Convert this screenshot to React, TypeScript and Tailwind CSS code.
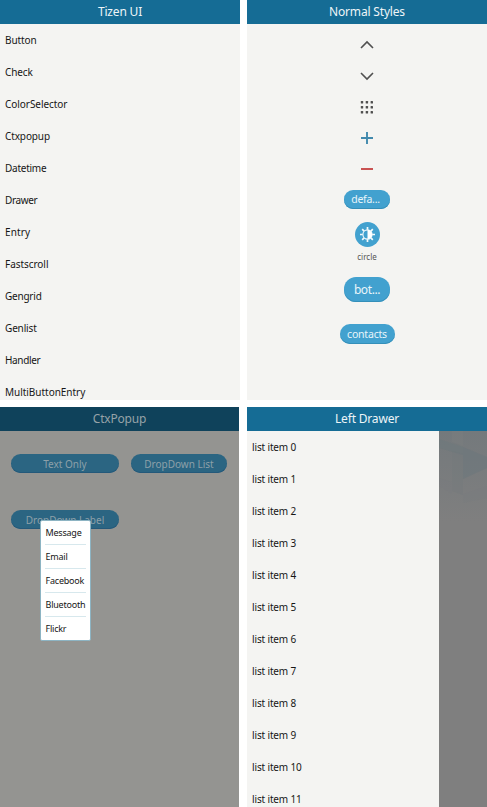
import React from "react";

const categories: [string, string][] = [
  ["Button", "tracking-[-0.1px]"],
  ["Check", "tracking-[-0.1px]"],
  ["ColorSelector", "tracking-[-0.05px]"],
  ["Ctxpopup", "tracking-[-0.12px]"],
  ["Datetime", "tracking-[-0.25px]"],
  ["Drawer", "tracking-[-0.35px]"],
  ["Entry", "tracking-[0.1px]"],
  ["Fastscroll", "tracking-[-0.05px]"],
  ["Gengrid", "tracking-[-0.22px]"],
  ["Genlist", "tracking-[-0.15px]"],
  ["Handler", "tracking-[-0.35px]"],
  ["MultiButtonEntry", "tracking-[-0.03px]"],
];

const drawerItems = Array.from({ length: 12 }, (_, i) => `list item ${i}`);
const popupItems = ["Message", "Email", "Facebook", "Bluetooth", "Flickr"];

function Header({ title, dim = false }: { title: string; dim?: boolean }) {
  return (
    <header
      className={`flex h-6 shrink-0 items-center justify-center text-[12px] leading-6 tracking-[-0.18px] ${
        dim ? "bg-[#0f425b] text-[#96a2a8]" : "bg-[#156c95] text-[#eef5f8]"
      }`}
    >
      {title}
    </header>
  );
}

function Row({ label, tracking = "tracking-[-0.14px]" }: { label: string; tracking?: string }) {
  return (
    <li className={`flex h-8 shrink-0 items-center pl-[5px] text-[10px] text-[#161616] ${tracking}`}>
      {label}
    </li>
  );
}

function Pill({ label, className }: { label: string; className: string }) {
  return (
    <button
      className={`flex items-center justify-center whitespace-nowrap bg-[#42a1cf] text-[#e9f5fa] shadow-[inset_0_-1px_0_#348fb9] ${className}`}
    >
      {label}
    </button>
  );
}

function DimPill({ label }: { label: string }) {
  return (
    <button className="flex h-[19px] items-center justify-center whitespace-nowrap rounded-full bg-[#2b6582] pt-px text-[10px] text-[#8da0a9] shadow-[inset_0_-1px_0_#24597a]">
      {label}
    </button>
  );
}

function Icon({ children }: { children: React.ReactNode }) {
  return (
    <svg className="mb-[15px] h-4 w-4 shrink-0" viewBox="0 0 16 16" fill="none">
      {children}
    </svg>
  );
}

function BrightnessIcon() {
  return (
    <svg className="h-[17px] w-[17px]" viewBox="0 0 17 17" fill="none" stroke="#f4fafc">
      <circle cx="8.5" cy="8.5" r="4.6" strokeWidth="1.1" />
      <path d="M8.5 3.8a4.7 4.7 0 0 1 0 9.4z" fill="#fff" stroke="none" />
      <path
        strokeWidth="1.7"
        d="M8.5 1v2.7M8.5 13.3V16M1 8.5h2.7M13.3 8.5H16M3.2 3.2l1.9 1.9M11.9 11.9l1.9 1.9M3.2 13.8l1.9-1.9M11.9 5.1l1.9-1.9"
      />
    </svg>
  );
}

function NormalStyles() {
  return (
    <section className="flex h-[400px] w-60 flex-col overflow-hidden bg-[#f4f4f2]">
      <Header title="Normal Styles" />
      <div className="flex flex-col items-center pt-[13px]">
        <Icon>
          <path d="M2 11l6-6 6 6" stroke="#505050" strokeWidth="1.6" />
        </Icon>
        <Icon>
          <path d="M2 5l6 6 6-6" stroke="#505050" strokeWidth="1.6" />
        </Icon>
        <Icon>
          {[2, 7, 12].map((y) =>
            [1.8, 6.7, 11.6].map((x) => (
              <rect key={`${x}-${y}`} x={x} y={y} width="2.4" height="2.4" rx=".5" fill="#505050" />
            )),
          )}
        </Icon>
        <Icon>
          <path d="M2 8h12M8 2v12" stroke="#4189ad" strokeWidth="1.9" />
        </Icon>
        <Icon>
          <path d="M2 8h12" stroke="#c95252" strokeWidth="2" />
        </Icon>
        <Pill
          label="defa..."
          className="-mt-[2px] h-[19px] w-[46px] rounded-[9px] pr-[3px] pt-px text-[10.5px] tracking-[-0.25px]"
        />
        <div className="mt-[13px] flex h-[25px] w-[25px] items-center justify-center rounded-full bg-[#42a1cf]">
          <BrightnessIcon />
        </div>
        <span className="mt-[4px] text-[8px] leading-3 text-[#555]">circle</span>
        <Pill
          label="bot..."
          className="mt-[14px] h-[25px] w-[46px] rounded-[12px] text-[12px] tracking-[-0.4px]"
        />
        <Pill
          label="contacts"
          className="mt-[22px] h-[20px] w-[55px] rounded-[10px] pt-[2px] text-[10.5px] tracking-[-0.2px]"
        />
      </div>
    </section>
  );
}

function CtxPopup() {
  return (
    <section className="relative flex h-[400px] w-[239px] flex-col overflow-hidden bg-[#949491]">
      <Header title="CtxPopup" dim />
      <div className="grid grid-cols-[108px_96px] gap-x-3 gap-y-[37px] pl-[11px] pt-[23px]">
        <DimPill label="Text Only" />
        <DimPill label="DropDown List" />
        <DimPill label="DropDown Label" />
      </div>
      <ul className="absolute left-10 top-[113px] flex h-[121px] w-[51px] flex-col rounded-[2px] border border-[#8db4c3] bg-white px-1">
        {popupItems.map((item) => (
          <li
            key={item}
            className="flex h-6 shrink-0 items-center border-b border-[#d7e8ed] pl-[0.5px] text-[9px] tracking-[-0.22px] text-[#161616] last:border-b-0"
          >
            {item}
          </li>
        ))}
      </ul>
    </section>
  );
}

function DrawerBackdrop() {
  return (
    <svg className="h-full w-12" viewBox="0 0 48 376" preserveAspectRatio="none">
      <defs>
        <linearGradient id="shade" x1="0" y1="0" x2="0" y2="1">
          <stop offset="0" stopColor="#74797c" />
          <stop offset=".24" stopColor="#7f7f7f" />
          <stop offset="1" stopColor="#7f7f7f" />
        </linearGradient>
      </defs>
      <path fill="url(#shade)" d="M0 0h48v376H0z" />
      <path fill="#7a7d7f" opacity=".6" d="M13 0h11v15L13 11z" />
      <path fill="#6c777b" opacity=".5" d="M0 8l24 8v8L0 17z" />
      <path fill="#6c777b" opacity=".55" d="M24 16l24 10v11L24 48z" />
      <path fill="#70797c" opacity=".25" d="M13 20l11 3v41l-11-4z" />
      <path fill="#777c7e" opacity=".3" d="M0 47l13 4v12L0 55zM24 63l24-8v12L24 72z" />
    </svg>
  );
}

export default function App() {
  return (
    <main className="grid h-[807px] w-[487px] grid-cols-[240px_240px] grid-rows-[400px_400px] gap-[7px] overflow-hidden bg-white font-['Noto_Sans',sans-serif]">
      <section className="flex h-[400px] flex-col overflow-hidden bg-[#f4f4f2]">
        <Header title="Tizen UI" />
        <ul className="flex flex-col">
          {categories.map(([label, tracking]) => (
            <Row key={label} label={label} tracking={tracking} />
          ))}
        </ul>
      </section>
      <NormalStyles />
      <CtxPopup />
      <section className="flex h-[400px] flex-col overflow-hidden">
        <Header title="Left Drawer" />
        <div className="flex h-[376px]">
          <ul className="flex w-48 flex-col overflow-hidden bg-[#f4f4f2]">
            {drawerItems.map((label) => (
              <Row key={label} label={label} />
            ))}
          </ul>
          <DrawerBackdrop />
        </div>
      </section>
    </main>
  );
}
